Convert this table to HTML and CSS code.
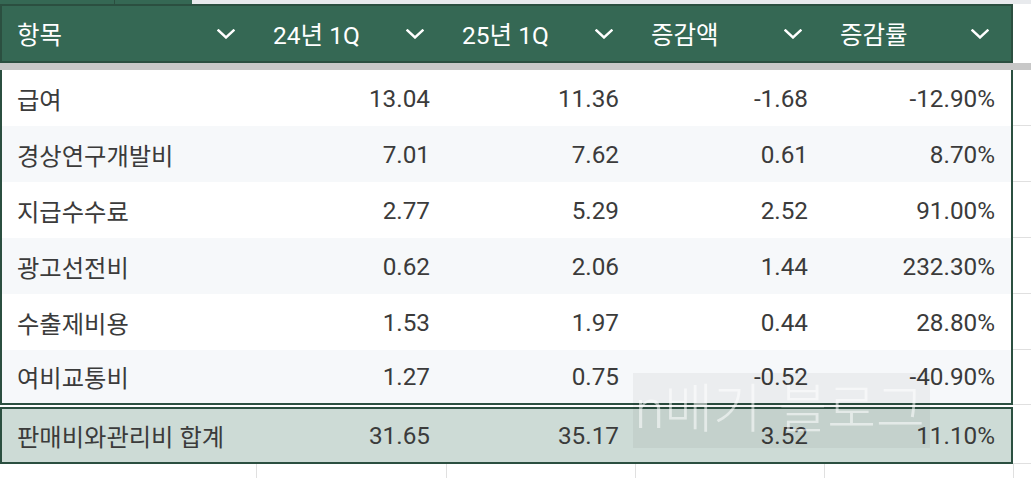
FILE: index.html
```html
<!DOCTYPE html>
<html lang="ko">
<head>
<meta charset="utf-8">
<link rel="stylesheet" href="styles.css">
</head>
<body>
<div class="sheet">
  <div class="tabs">
    <div class="tab tab-a"></div>
    <div class="tab tab-b"></div>
  </div>
  <div class="line head-line">
    <div class="header grid">
      <div class="hcell"><span>항목</span><svg class="chev" viewBox="0 0 18 10"><path d="M1.5 1.5 L9 8.5 L16.5 1.5"/></svg></div>
      <div class="hcell"><span>24년 1Q</span><svg class="chev" viewBox="0 0 18 10"><path d="M1.5 1.5 L9 8.5 L16.5 1.5"/></svg></div>
      <div class="hcell"><span>25년 1Q</span><svg class="chev" viewBox="0 0 18 10"><path d="M1.5 1.5 L9 8.5 L16.5 1.5"/></svg></div>
      <div class="hcell"><span>증감액</span><svg class="chev" viewBox="0 0 18 10"><path d="M1.5 1.5 L9 8.5 L16.5 1.5"/></svg></div>
      <div class="hcell"><span>증감률</span><svg class="chev" viewBox="0 0 18 10"><path d="M1.5 1.5 L9 8.5 L16.5 1.5"/></svg></div>
    </div>
    <div class="side-head"></div>
  </div>
  <div class="band"></div>
  <div class="line">
    <div class="tbody">
      <div class="row grid"><div class="c name">급여</div><div class="c">13.04</div><div class="c">11.36</div><div class="c">-1.68</div><div class="c">-12.90%</div></div>
      <div class="row grid alt"><div class="c name">경상연구개발비</div><div class="c">7.01</div><div class="c">7.62</div><div class="c">0.61</div><div class="c">8.70%</div></div>
      <div class="row grid"><div class="c name">지급수수료</div><div class="c">2.77</div><div class="c">5.29</div><div class="c">2.52</div><div class="c">91.00%</div></div>
      <div class="row grid alt"><div class="c name">광고선전비</div><div class="c">0.62</div><div class="c">2.06</div><div class="c">1.44</div><div class="c">232.30%</div></div>
      <div class="row grid"><div class="c name">수출제비용</div><div class="c">1.53</div><div class="c">1.97</div><div class="c">0.44</div><div class="c">28.80%</div></div>
      <div class="row grid alt last"><div class="c name">여비교통비</div><div class="c">1.27</div><div class="c">0.75</div><div class="c">-0.52</div><div class="c">-40.90%</div></div>
    </div>
    <div class="side">
      <div class="sc"></div><div class="sc"></div><div class="sc"></div><div class="sc"></div><div class="sc"></div><div class="sc"></div>
    </div>
  </div>
  <div class="line">
    <div class="total grid"><div class="c name">판매비와관리비 합계</div><div class="c">31.65</div><div class="c">35.17</div><div class="c">3.52</div><div class="c">11.10%</div></div>
    <div class="side side-total"></div>
  </div>
  <div class="foot">
    <div class="fc"></div><div class="fc"></div><div class="fc"></div><div class="fc"></div><div class="fc"></div><div class="fc last-fc"></div>
  </div>
  <div class="watermark">n배기 블로그</div>
</div>
</body>
</html>
```

FILE: styles.css
```css
* { box-sizing: border-box; }
html, body { margin: 0; padding: 0; background: #ffffff; }
body {
  font-family: Roboto, "Noto Sans CJK KR", sans-serif;
  width: 1031px;
  height: 478px;
  overflow: hidden;
}
.sheet { position: relative; width: 1031px; height: 478px; }

.tabs { display: flex; height: 4px; background: #e8eaed; }
.tab { background: #356854; height: 4px; }
.tab-a { width: 115px; border-right: 1px solid #2b4f40; }
.tab-b { width: 77px; }

.line { display: flex; }
.grid {
  display: grid;
  grid-template-columns: 255px 189px 189px 189px 1fr;
}

.header {
  width: 1013px;
  height: 59px;
  background: #356854;
  border: 2px solid #2b4f40;
  color: #ffffff;
  font-size: 24.5px;
}
.hcell {
  display: flex;
  align-items: center;
  justify-content: space-between;
  padding: 0 22px 0 16px;
}
.hcell:first-child { padding-left: 15px; }
.chev { width: 18px; height: 10px; }
.chev path { fill: none; stroke: #ffffff; stroke-width: 2.4; stroke-linecap: square; }
.side-head { flex: 1; background: #ffffff; }

.band { height: 7px; background: #c8c8c8; }

.tbody {
  width: 1013px;
  border-left: 2px solid #2b4f40;
  border-right: 2px solid #2b4f40;
  border-bottom: 2px solid #2b4f40;
}
.row { height: 56px; background: #ffffff; }
.row.alt { background: #f6f8fa; }
.row.last { height: 53px; }
.c {
  display: flex;
  align-items: center;
  justify-content: flex-end;
  padding: 0 16px 0 0;
  font-size: 24.3px;
  color: #3b3b3b;
}
.c.name { justify-content: flex-start; padding-left: 15px; }

.side { flex: 1; display: flex; flex-direction: column; }
.sc { height: 56px; border-bottom: 1px solid #e0e0e0; }
.sc:last-child { height: 55px; }

.total {
  width: 1013px;
  height: 57px;
  margin-top: 2px;
  background: #cddbd6;
  border: 2px solid #2b4f40;
}
.side-total { border-bottom: 1px solid #e0e0e0; height: 59px; }

.foot {
  display: grid;
  grid-template-columns: 257px 189px 189px 189px 189px 1fr;
  height: 16px;
}
.fc { border-right: 1px solid #e0e0e0; margin-right: -1px; }
.fc:first-child { border-right: none; }
.fc:first-child + .fc { border-left: 1px solid #e0e0e0; margin-left: -1px; }
.last-fc { border-right: none; }

.watermark {
  position: absolute;
  left: 633px;
  top: 373px;
  width: 297px;
  height: 75px;
  background: rgba(0, 0, 0, 0.045);
  color: rgba(255, 255, 255, 0.55);
  font-size: 53px;
  font-weight: 300;
  line-height: 75px;
  white-space: nowrap;
  padding-left: 2px;
  word-spacing: 4px;
}
```
